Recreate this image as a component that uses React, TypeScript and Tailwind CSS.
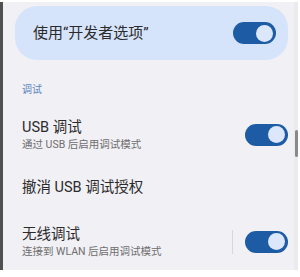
import React from "react";

const font = { fontFamily: 'Roboto, "Noto Sans CJK SC", sans-serif' };

function Toggle() {
  return (
    <div className="flex h-[22px] w-[43px] shrink-0 items-center justify-end rounded-full bg-[#1d5ca5] pr-[3px]">
      <div className="h-[17px] w-[17px] rounded-full bg-[#dde7fb]" />
    </div>
  );
}

export default function App() {
  return (
    <div className="h-[277px] w-[300px] bg-white pb-[7px] pr-[2px] pt-[2px]" style={font}>
      <div className="relative h-full border-l-[3px] border-[#505050] bg-[#f1f0f5]">
        {/* scrollbar track + thumb */}
        <div className="absolute right-0 top-0 h-full w-[4px] bg-[#ebeaef]" />
        <div className="absolute right-0 top-[128px] h-[27px] w-[3px] rounded-sm bg-[#8a8a8a]" />

        <div className="pl-[12px] pt-[4px] pr-[10px]">
          <div className="flex h-[54px] items-center justify-between rounded-[22px] bg-[#d6e4fb] pl-[18px] pr-[12px]">
            <span className="text-[15px] text-[#2b2b2b]">使用“开发者选项”</span>
            <Toggle />
          </div>
        </div>

        <div className="pl-[19px] pr-[10px]">
          <div className="mt-[24px] text-[10px] leading-[12px] text-[#5d87bd]">调试</div>

          <div className="mt-[22px] flex items-center justify-between">
            <div>
              <div className="text-[14.5px] leading-[20px] text-[#2b2b2b]">USB 调试</div>
              <div className="mt-[1px] text-[10.5px] leading-[12px] text-[#6e6e6e]">通过 USB 后启用调试模式</div>
            </div>
            <Toggle />
          </div>

          <div className="mt-[27px] text-[14.5px] leading-[20px] text-[#2b2b2b]">撤消 USB 调试授权</div>

          <div className="mt-[27px] flex items-center justify-between">
            <div>
              <div className="text-[14.5px] leading-[20px] text-[#2b2b2b]">无线调试</div>
              <div className="mt-[1px] text-[10.5px] leading-[12px] text-[#6e6e6e]">连接到 WLAN 后启用调试模式</div>
            </div>
            <div className="flex items-center">
              <div className="mr-[12px] h-[24px] w-px bg-[#d8d8dc]" />
              <Toggle />
            </div>
          </div>
        </div>
      </div>
    </div>
  );
}
